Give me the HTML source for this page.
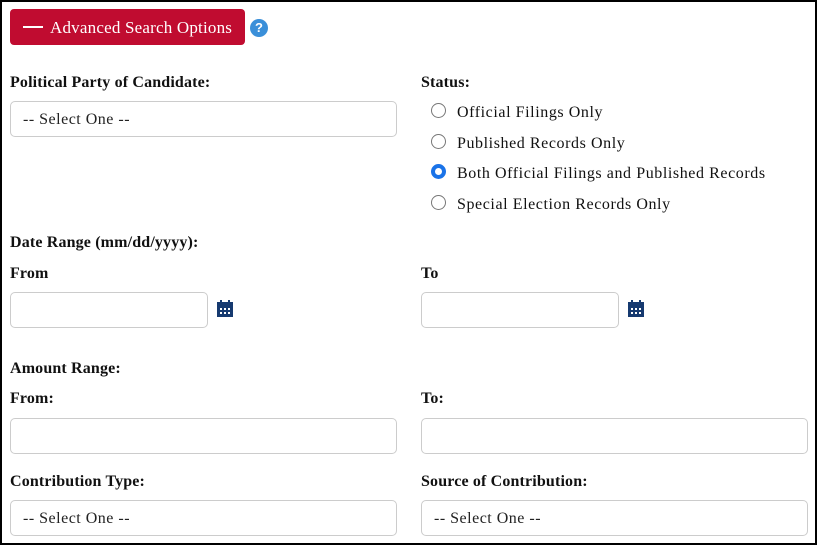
<!DOCTYPE html>
<html><head><style>
body{margin:0;width:817px;height:545px;overflow:hidden;background:#fff;font-family:"Liberation Serif",serif;color:#111}
.frame{position:absolute;left:0;top:0;width:813px;height:541px;border:2px solid #000}
.a{position:absolute}
.lbl{position:absolute;font-weight:bold;font-size:16px;line-height:18px;letter-spacing:0.15px;margin-top:1px}
.box{position:absolute;border:1px solid #ccc;border-radius:5px;background:#fff;box-sizing:border-box;font-size:16px;padding:1px 0 0 12px;line-height:34px;color:#222;letter-spacing:0.5px}
.btn{left:10px;top:9px;width:235px;height:36px;background:#c00c30;border-radius:4px;color:#fff;font-size:17px;line-height:37px;letter-spacing:0.2px}
.rad{position:absolute;left:431px;width:15px;height:15px;border:1px solid #777;border-radius:50%;box-sizing:border-box}
.rt{position:absolute;left:457px;font-size:16px;line-height:18px;letter-spacing:0.58px;margin-top:1px}
.cal{position:absolute;width:16px;height:17px}
</style></head><body>
<div class="frame"></div>
<div class="a btn"><span style="position:absolute;left:13px;top:17px;width:20px;height:2px;background:#fff"></span><span style="position:absolute;left:40px">Advanced Search Options</span></div>
<div class="a" style="left:250px;top:19px;width:18px;height:18px;border-radius:50%;background:#3a8fd9;color:#fff;font:bold 13px/18px 'Liberation Sans',sans-serif;text-align:center">?</div>
<div class="lbl" style="left:10px;top:73px">Political Party of Candidate:</div>
<div class="box" style="left:10px;top:101px;width:387px;height:36px">-- Select One --</div>
<div class="lbl" style="left:421px;top:73px">Status:</div>
<div class="rad" style="top:103px"></div><div class="rt" style="top:103px">Official Filings Only</div>
<div class="rad" style="top:134px"></div><div class="rt" style="top:134px">Published Records Only</div>
<div class="rad" style="top:164px;border:4px solid #1a73e8"></div><div class="rt" style="top:164px">Both Official Filings and Published Records</div>
<div class="rad" style="top:195px"></div><div class="rt" style="top:195px">Special Election Records Only</div>
<div class="lbl" style="left:10px;top:233px">Date Range (mm/dd/yyyy):</div>
<div class="lbl" style="left:10px;top:264px">From</div>
<div class="lbl" style="left:421px;top:264px">To</div>
<div class="box" style="left:10px;top:292px;width:198px;height:36px"></div>
<div class="box" style="left:421px;top:292px;width:198px;height:36px"></div>
<svg class="cal" style="left:217px;top:300px" viewBox="0 0 16 17"><rect x="0" y="2" width="16" height="15" fill="#163a70"/><rect x="3" y="0" width="2" height="4" fill="#163a70"/><rect x="11" y="0" width="2" height="4" fill="#163a70"/><g fill="#fff"><rect x="3" y="8" width="2" height="2"/><rect x="7" y="8" width="2" height="2"/><rect x="11" y="8" width="2" height="2"/><rect x="3" y="12" width="2" height="2"/><rect x="7" y="12" width="2" height="2"/><rect x="11" y="12" width="2" height="2"/></g></svg>
<svg class="cal" style="left:628px;top:300px" viewBox="0 0 16 17"><rect x="0" y="2" width="16" height="15" fill="#163a70"/><rect x="3" y="0" width="2" height="4" fill="#163a70"/><rect x="11" y="0" width="2" height="4" fill="#163a70"/><g fill="#fff"><rect x="3" y="8" width="2" height="2"/><rect x="7" y="8" width="2" height="2"/><rect x="11" y="8" width="2" height="2"/><rect x="3" y="12" width="2" height="2"/><rect x="7" y="12" width="2" height="2"/><rect x="11" y="12" width="2" height="2"/></g></svg>
<div class="lbl" style="left:10px;top:359px">Amount Range:</div>
<div class="lbl" style="left:10px;top:389px">From:</div>
<div class="lbl" style="left:421px;top:389px">To:</div>
<div class="box" style="left:10px;top:418px;width:387px;height:36px"></div>
<div class="box" style="left:421px;top:418px;width:387px;height:36px"></div>
<div class="lbl" style="left:10px;top:472px">Contribution Type:</div>
<div class="lbl" style="left:421px;top:472px">Source of Contribution:</div>
<div class="box" style="left:10px;top:500px;width:387px;height:36px">-- Select One --</div>
<div class="box" style="left:421px;top:500px;width:387px;height:36px">-- Select One --</div>
</body></html>
